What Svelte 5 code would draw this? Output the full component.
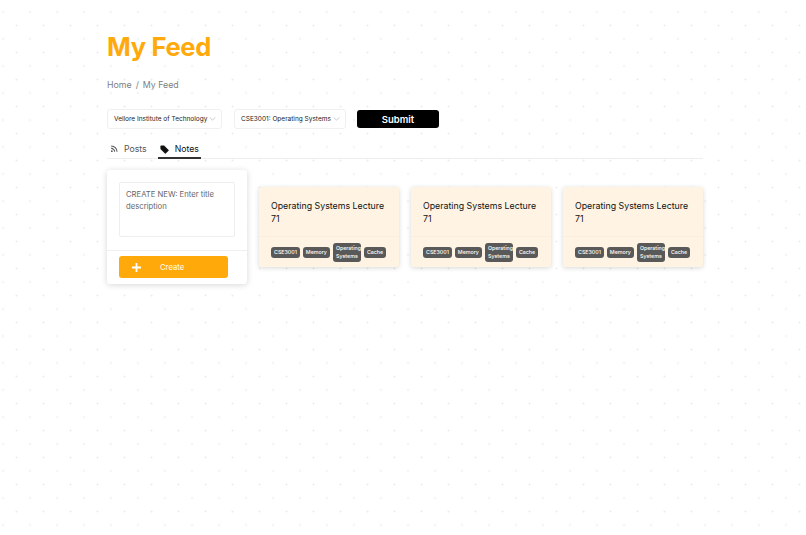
<script>
	const tags = ['CSE3001', 'Memory', 'Operating Systems', 'Cache'];
	const notes = [1, 2, 3];
</script>

<div class="page">
	<h1>My Feed</h1>
	<nav class="crumbs">
		<span>Home</span>
		<span class="sep">/</span>
		<span>My Feed</span>
	</nav>

	<div class="filters">
		<div class="select first">
			<span>Vellore Institute of Technology</span>
			<svg width="7" height="4" viewBox="0 0 8 5"><path d="M.5.5 4 4 7.500.5" fill="none" stroke="#aaa" stroke-width=".8" /></svg>
		</div>
		<div class="select second">
			<span>CSE3001: Operating Systems</span>
			<svg width="7" height="4" viewBox="0 0 8 5"><path d="M.5.5 4 4 7.500.5" fill="none" stroke="#aaa" stroke-width=".8" /></svg>
		</div>
		<button class="submit">Submit</button>
	</div>

	<div class="tabs">
		<div class="tab">
			<svg width="8" height="8" viewBox="0 0 10 10" fill="none" stroke="#555" stroke-width="1.300">
				<path d="M1.500 1.200a7.300 7.300 0 0 1 7.300 7.300" />
				<path d="M1.500 4.200a4.300 4.300 0 0 1 4.300 4.300" />
				<circle cx="2.300" cy="7.700" r="1.100" fill="#555" stroke="none" />
			</svg>
			<span>Posts</span>
		</div>
		<div class="tab active">
			<svg width="9" height="9" viewBox="0 0 10 10"><path d="M.5 1.300q0-.8.800-.8h3.200l5 5q.4.400 0 .8L6.300 9.500q-.4.400-.8 0l-5-5z" fill="#111" /></svg>
			<span>Notes</span>
		</div>
	</div>

	<div class="grid">
		<div class="create">
			<div class="create-top">
				<div class="area">CREATE NEW: Enter title description</div>
			</div>
			<div class="create-bottom">
				<button class="create-btn">
					<svg width="9" height="9" viewBox="0 0 9 9"><path d="M4.500 0v9M0 4.500h9" stroke="#fff" stroke-width="1.800" /></svg>
					<span>Create</span>
				</button>
			</div>
		</div>

		{#each notes as n}
			<div class="note">
				<div class="note-title">Operating Systems Lecture 71</div>
				<div class="note-tags">
					{#each tags as t}
						<span class="tag">{t}</span>
					{/each}
				</div>
			</div>
		{/each}
	</div>
</div>

<style>
	:global(body) {
		margin: 0;
		background-color: #fff;
		background-image:
			radial-gradient(circle, #ececec 0.8px, transparent 1.2px),
			radial-gradient(circle, #ececec 0.8px, transparent 1.2px);
		background-size: 27px 27px;
		background-position: -10.500px -1.500px, 3px 12px;
		font-family: Inter, 'Noto Sans', sans-serif;
	}

	.page {
		box-sizing: border-box;
		width: 806px;
		height: 535px;
		padding: 30px 103px 0 107px;
	}

	h1 {
		margin: 0;
		font-size: 25.500px;
		line-height: 34px;
		font-weight: 700;
		color: #ffa90a;
		letter-spacing: -0.3px;
	}

	.crumbs {
		display: flex;
		gap: 4px;
		margin-top: 14px;
		font-size: 8.800px;
		line-height: 14px;
		color: #808080;
	}

	.filters {
		display: flex;
		align-items: flex-start;
		margin-top: 17px;
	}

	.select {
		box-sizing: border-box;
		display: flex;
		align-items: center;
		justify-content: space-between;
		height: 20px;
		padding: 0 5px 0 6px;
		background: #fff;
		border: 1px solid #f0f0f0;
		border-radius: 3px;
		font-size: 6.500px;
		color: #222;
		white-space: nowrap;
	}

	.first {
		width: 115px;
		margin-right: 12px;
	}

	.second {
		width: 112px;
		margin-right: 11px;
	}

	.submit {
		width: 82px;
		height: 18px;
		margin-top: 1px;
		padding: 0;
		border: none;
		border-radius: 3px;
		background: #000;
		color: #fff;
		font-family: inherit;
		font-size: 9.500px;
		font-weight: 600;
	}

	.tabs {
		display: flex;
		gap: 11px;
		margin-top: 13px;
		border-bottom: 1px solid #eee;
	}

	.tab {
		display: flex;
		align-items: center;
		gap: 6px;
		height: 14px;
		padding: 0 0 1px 3px;
		font-size: 8.700px;
		color: #555;
	}

	.tab.active {
		gap: 6px;
		margin-bottom: -1px;
		padding-left: 2px;
		padding-right: 2px;
		border-bottom: 2px solid #333;
		color: #111;
	}

	.grid {
		display: grid;
		grid-template-columns: repeat(4, 1fr);
		gap: 12px;
		align-items: start;
		margin-top: 11px;
	}

	.create {
		background: #fff;
		border-radius: 3px;
		box-shadow: 0 1px 6px rgba(0, 0, 0, 0.16);
	}

	.create-top {
		padding: 12px 12px 13px;
		border-bottom: 1px solid #f0f0f0;
	}

	.area {
		box-sizing: border-box;
		height: 55px;
		padding: 6px;
		border: 1px solid #eee;
		border-radius: 2px;
		background: #fff;
		font-size: 7.700px;
		line-height: 12px;
		color: #666;
	}

	.create-bottom {
		padding: 5px 19px 6px 12px;
	}

	.create-btn {
		display: flex;
		align-items: center;
		width: 109px;
		height: 22px;
		padding: 0 0 0 13px;
		border: none;
		border-radius: 3px;
		background: #ffa90a;
		color: #fff;
		font-family: inherit;
		font-size: 7.700px;
	}

	.create-btn span {
		margin-left: 19px;
	}

	.note {
		margin-top: 17px;
		background: #fff4e3;
		border-radius: 3px;
		box-shadow: 0 1px 5px rgba(0, 0, 0, 0.16);
	}

	.note-title {
		box-sizing: border-box;
		height: 50px;
		padding: 12px 12px 0;
		font-size: 8.800px;
		line-height: 13px;
		color: #111;
		border-bottom: 1px solid #fbeedb;
	}

	.note-tags {
		display: flex;
		align-items: center;
		gap: 3px;
		height: 30px;
		padding: 0 12px;
	}

	.tag {
		flex: none;
		box-sizing: border-box;
		max-width: 28px;
		padding: 1.500px 3px;
		border-radius: 3px;
		background: #595959;
		color: #fff;
		font-size: 5.300px;
		font-weight: 500;
		line-height: 8px;
		text-align: center;
	}

	.tag:nth-child(1),
	.tag:nth-child(2) {
		max-width: none;
	}
</style>
